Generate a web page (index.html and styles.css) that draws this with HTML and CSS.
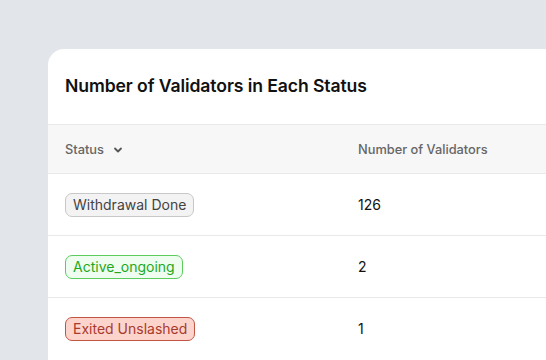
FILE: index.html
```html
<!DOCTYPE html>
<html lang="en">
<head>
	<meta charset="UTF-8" />
	<title>Validators by Status</title>
	<link rel="stylesheet" href="styles.css">
</head>
<body>
	<main class="page">
		<section class="card">
			<h2 class="card-title">Number of Validators in Each Status</h2>
			<div class="table">
				<div class="row head">
					<div class="cell">Status
						<svg class="chevron" width="10" height="10" viewBox="0 0 10 10"><path d="M2 3.5 L5 6.5 L8 3.5" fill="none" stroke="#555" stroke-width="1.8" stroke-linecap="round" stroke-linejoin="round"/></svg>
					</div>
					<div class="cell">Number of Validators</div>
				</div>
				<div class="row">
					<div class="cell"><span class="badge done">Withdrawal Done</span></div>
					<div class="cell">126</div>
				</div>
				<div class="row">
					<div class="cell"><span class="badge active">Active_ongoing</span></div>
					<div class="cell">2</div>
				</div>
				<div class="row">
					<div class="cell"><span class="badge exited">Exited Unslashed</span></div>
					<div class="cell">1</div>
				</div>
			</div>
		</section>
	</main>
</body>
</html>
```

FILE: styles.css
```css
* {
	margin: 0;
	padding: 0;
	box-sizing: border-box;
	font-family: Inter, "Noto Sans", sans-serif;
}

body {
	background: #e2e5ea;
	overflow: hidden;
	height: 360px;
}

.page {
	padding: 49px 0 0 48px;
}

.card {
	background: #fff;
	border-radius: 16px 0 0 0;
	height: 320px;
}

.card-title {
	height: 75px;
	display: flex;
	align-items: center;
	padding: 0 17px;
	padding-bottom: 2px;
	font-size: 17.6px;
	font-weight: 600;
	color: #111;
	letter-spacing: -0.1px;
}

.row {
	display: grid;
	grid-template-columns: 293px 1fr;
	height: 62px;
	align-items: center;
	border-top: 1px solid #e9e9e9;
}

.row .cell {
	padding-left: 17px;
	font-size: 14px;
	color: #111;
}

.row.head {
	height: 49px;
	background: #f7f7f7;
}

.row.head .cell {
	font-size: 12.8px;
	font-weight: 500;
	color: #666;
	display: flex;
	align-items: center;
}

.chevron {
	margin-left: 9px;
	margin-top: 1px;
}

.badge {
	display: inline-block;
	padding: 3px 7px;
	border-radius: 7px;
	border: 1px solid;
	font-size: 14px;
	line-height: 16px;
}

.badge.done {
	background: #f3f3f3;
	border-color: #c8c8c8;
	color: #444;
}

.badge.active {
	background: #eefdef;
	border-color: #5ccc5c;
	color: #1ea81e;
}

.badge.exited {
	background: #fdd4cc;
	border-color: #c25443;
	color: #a83a2c;
}
```
